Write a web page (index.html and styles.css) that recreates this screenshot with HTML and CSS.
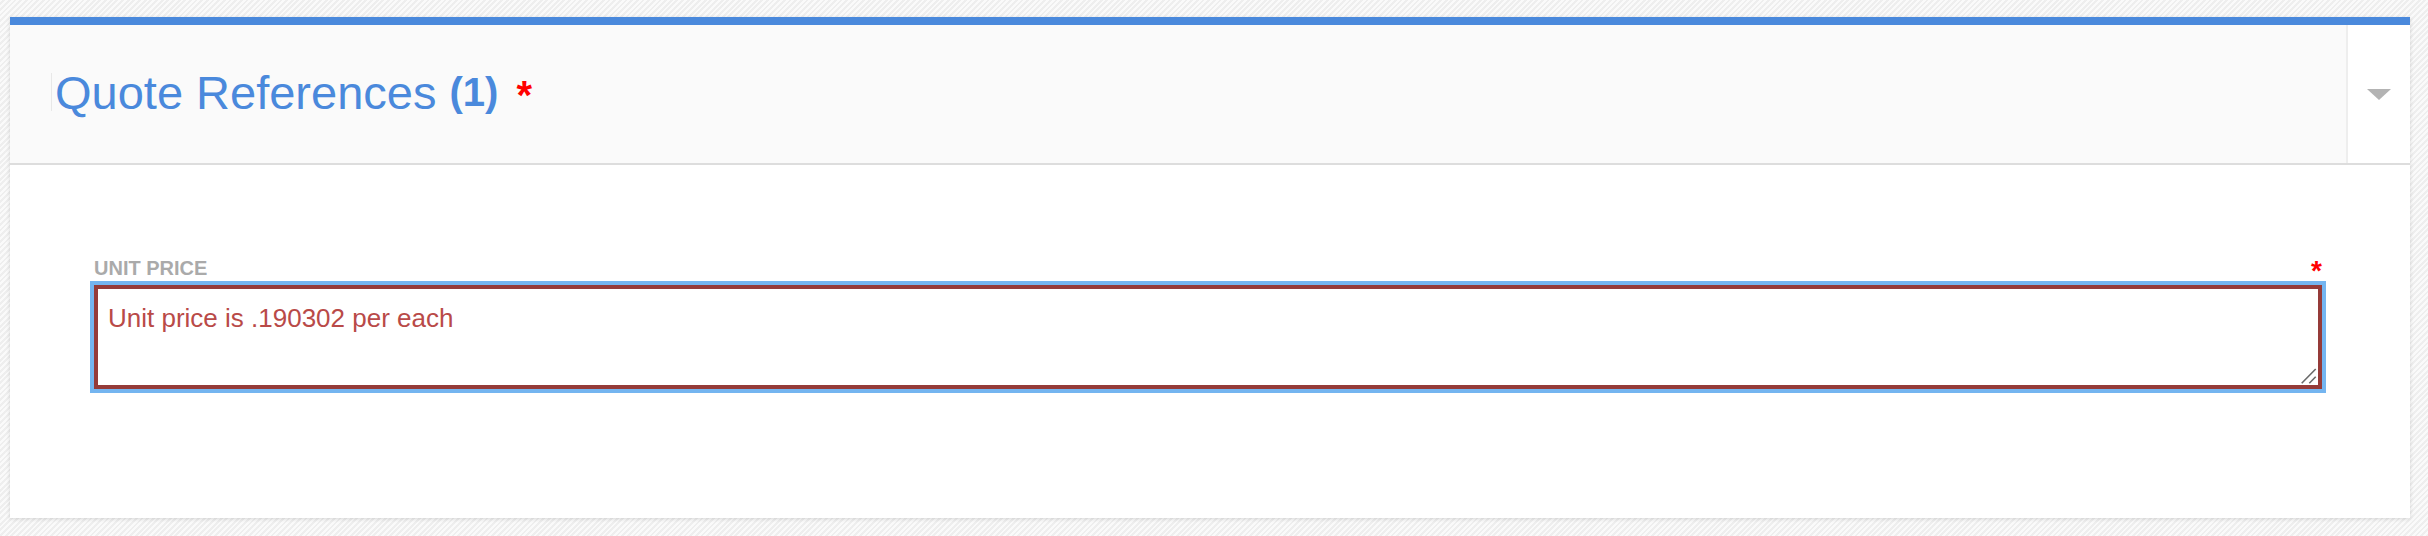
FILE: index.html
```html
<!DOCTYPE html>
<html lang="en">
<head>
<meta charset="utf-8">
<title>Quote References</title>
<link rel="stylesheet" href="styles.css">
</head>
<body>
<div class="page">
  <section class="card">
    <header class="card-header">
      <h2 class="title"><span class="caret-line"></span>Quote References <span class="count">(1)</span><span class="req-title">*</span></h2>
      <button class="toggle" type="button" aria-label="Collapse"><span class="tri"></span></button>
    </header>
    <div class="card-body">
      <div class="field">
        <div class="label-row">
          <label class="label" for="unit-price">UNIT PRICE</label>
          <span class="req">*</span>
        </div>
        <div class="input-wrap">
          <textarea id="unit-price" class="input error">Unit price is .190302 per each</textarea>
          <svg class="grip" width="16" height="16" viewBox="0 0 16 16" aria-hidden="true">
            <path d="M14.7 1 L0.7 15.3 M14.7 8.7 L8.3 15.3" stroke="#6a6a6a" stroke-width="1.6" fill="none"/>
          </svg>
        </div>
      </div>
    </div>
  </section>
</div>
</body>
</html>
```
FILE: styles.css
```css
html, body {
  margin: 0;
  padding: 0;
}
body {
  font-family: "Liberation Sans", Arial, sans-serif;
  background-color: #f3f3f3;
  background-image: repeating-linear-gradient(135deg, rgba(255,255,255,0.6) 0 2px, rgba(0,0,0,0.02) 2px 4px);
  height: 536px;
  overflow: hidden;
}
.page {
  padding: 17px 18px 0 10px;
}
.card {
  background: #fff;
  border-top: 8px solid #4a89dc;
  box-shadow: 0 1px 4px rgba(0,0,0,0.14);
  height: 501px;
  box-sizing: border-box;
  display: flex;
  flex-direction: column;
}
.card-header {
  display: flex;
  height: 140px;
  box-sizing: border-box;
  background: #fafafa;
  border-bottom: 2px solid #dddddd;
}
.title {
  flex: 1;
  margin: 0;
  padding: 0 0 4px 41px;
  display: flex;
  align-items: center;
  font-weight: normal;
  font-size: 47px;
  color: #4a89dc;
  white-space: pre;
}
.caret-line {
  width: 1px;
  height: 38px;
  background: #e8e8e8;
  margin-right: 3px;
  align-self: center;
}
.count {
  font-size: 40px;
  font-weight: bold;
}
.req-title {
  color: #ff0000;
  font-weight: bold;
  font-size: 40px;
  margin-left: 18px;
  align-self: flex-start;
  margin-top: 50px;
  line-height: 1;
}
.toggle {
  width: 64px;
  border: 0;
  border-left: 2px solid #eeeeee;
  background: #fff;
  padding: 0;
  display: flex;
  align-items: center;
  justify-content: center;
}
.tri {
  width: 0;
  height: 0;
  border-left: 12px solid transparent;
  border-right: 12px solid transparent;
  border-top: 11px solid #b3b3b3;
}
.card-body {
  padding: 91px 88px 0 84px;
}
.field {
  display: flex;
  flex-direction: column;
}
.label-row {
  display: flex;
  justify-content: space-between;
  align-items: flex-start;
  height: 24px;
  margin-bottom: 5px;
}
.label {
  font-size: 20px;
  line-height: 24px;
  font-weight: bold;
  color: #aaaaaa;
}
.req {
  color: #ff0000;
  font-weight: bold;
  font-size: 28px;
  line-height: 1;
  margin-top: 1px;
}
.input-wrap {
  position: relative;
}
.input {
  display: block;
  box-sizing: border-box;
  width: 100%;
  height: 104px;
  margin: 0;
  padding: 12px 10px;
  font-family: "Liberation Sans", Arial, sans-serif;
  font-size: 26px;
  line-height: 34px;
  background: #fff;
  resize: none;
}
.input.error {
  color: #b94a48;
  border: 4px solid #953b39;
  outline: 4px solid #74b5f0;
  border-radius: 0;
}
.grip {
  position: absolute;
  right: 5px;
  bottom: 5px;
}
```
